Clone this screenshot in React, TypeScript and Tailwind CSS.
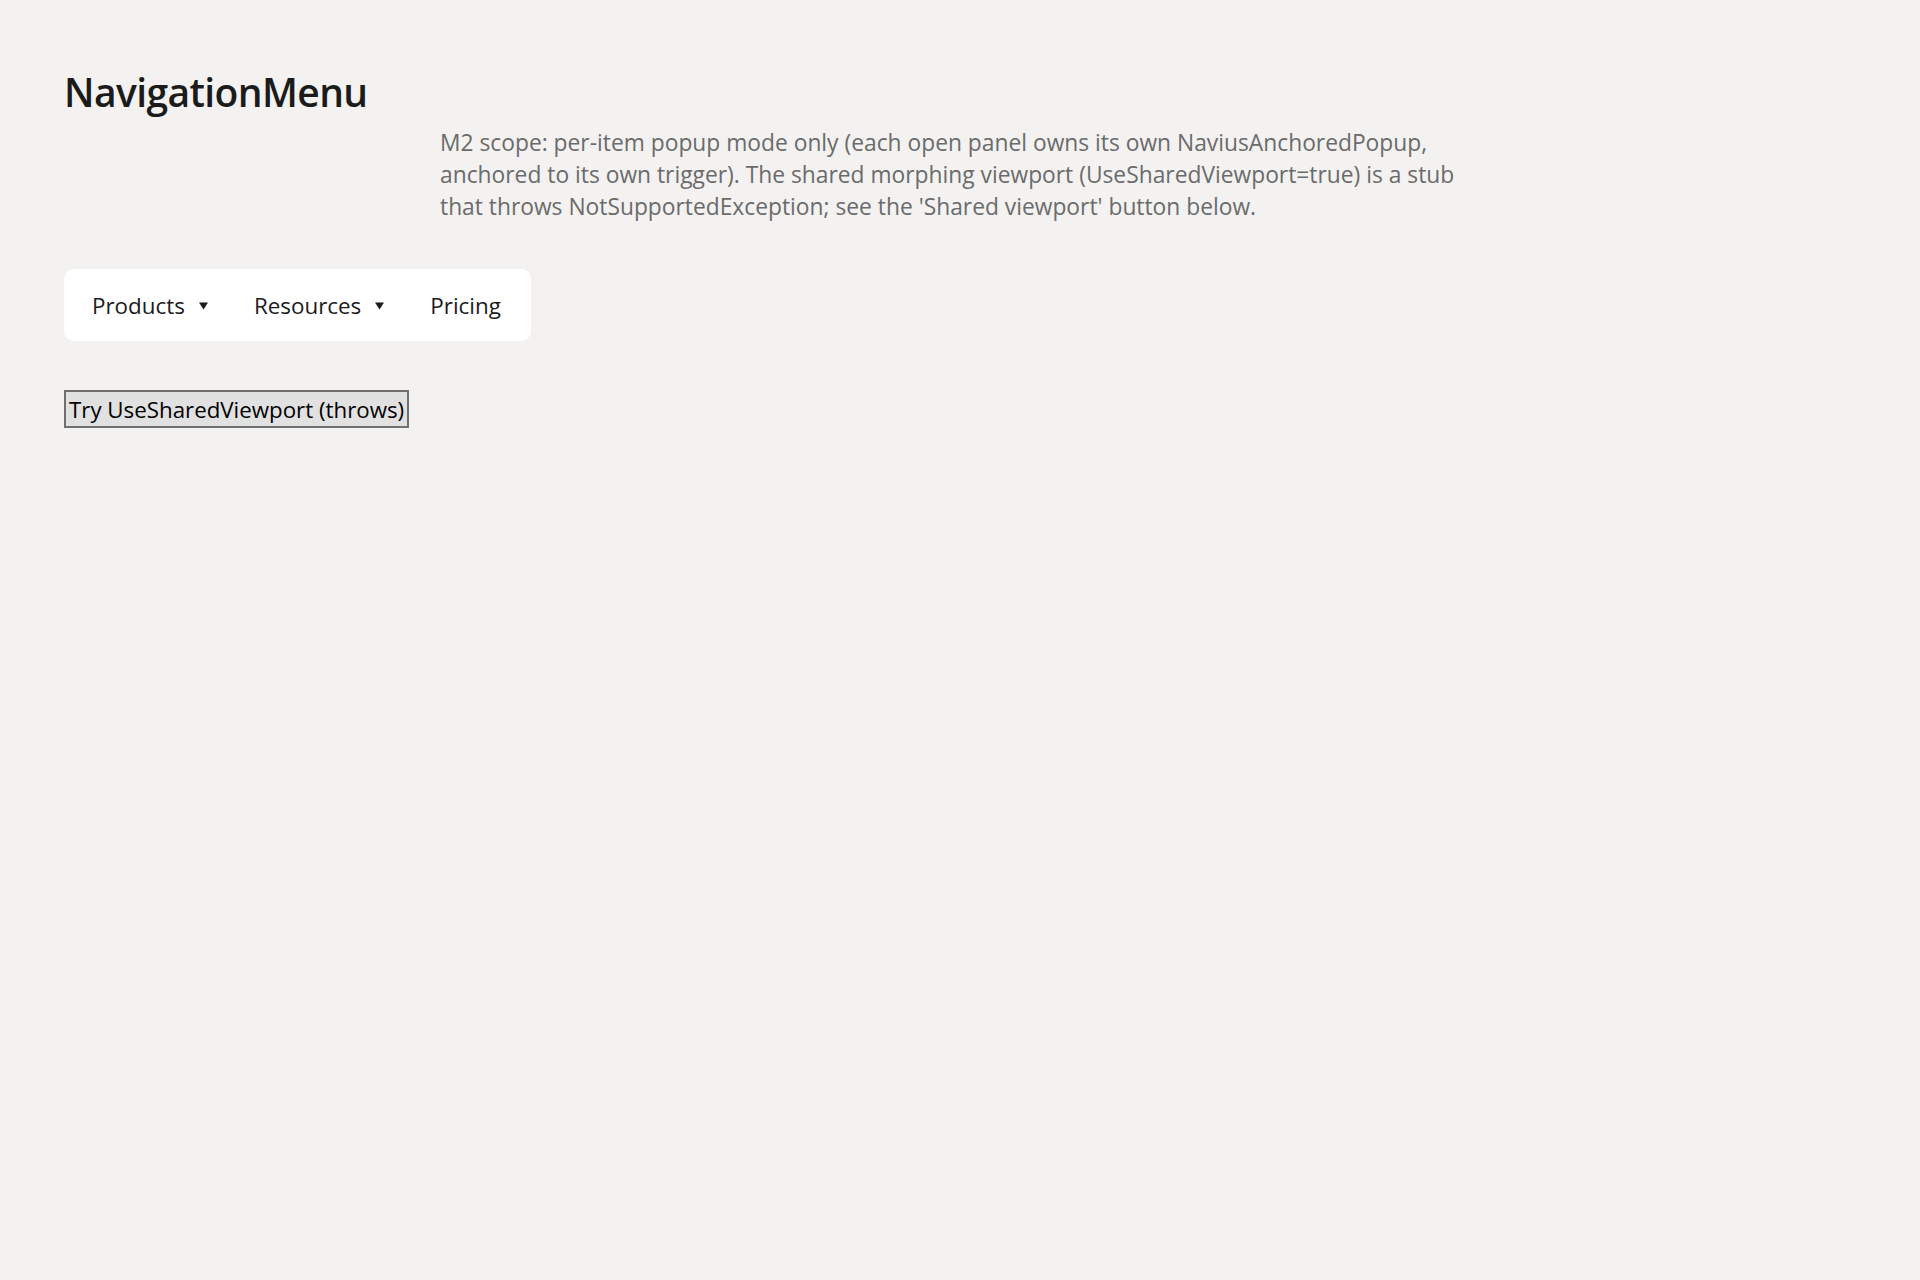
import React from "react";

function Caret() {
  return (
    <svg width="9" height="8" viewBox="0 0 9 8" className="shrink-0">
      <path d="M0 0.5 H9 L4.5 7.5 Z" fill="#1b1b1b" />
    </svg>
  );
}

const navItems = [
  { label: "Products", menu: true },
  { label: "Resources", menu: true },
  { label: "Pricing", menu: false },
];

export default function App() {
  return (
    <div
      className="min-h-screen bg-[#f3f2f1] px-16 pt-[65px] text-[#1b1b1b]"
      style={{ fontFamily: '"Open Sans", "Noto Sans", sans-serif' }}
    >
      <h1 className="text-[39px] leading-[53px] font-semibold tracking-[-0.6px]">NavigationMenu</h1>

      {/* scope note */}
      <p className="mt-[9px] ml-[376px] text-[22.8px] leading-[32px] text-[#6b6b6b]">
        M2 scope: per-item popup mode only (each open panel owns its own NaviusAnchoredPopup,
        <br />
        anchored to its own trigger). The shared morphing viewport (UseSharedViewport=true) is a stub
        <br />
        that throws NotSupportedException; see the 'Shared viewport' button below.
      </p>

      <nav className="mt-[46px] inline-flex h-[72px] items-center gap-[46px] rounded-[10px] bg-white pt-[2px] pl-[28px] pr-[30px]">
        {navItems.map((item) => (
          <button
            key={item.label}
            className="flex items-center gap-[14px] text-[22.4px] leading-[30px] text-[#1b1b1b]"
          >
            <span>{item.label}</span>
            {item.menu && <Caret />}
          </button>
        ))}
      </nav>

      <div className="mt-[49px]">
        <button className="h-[38px] border-2 border-[#707070] bg-[#e1e1e1] px-[3px] pt-[3px] pb-[1px] text-[22.3px] leading-[30px] text-black">
          Try UseSharedViewport (throws)
        </button>
      </div>
    </div>
  );
}
